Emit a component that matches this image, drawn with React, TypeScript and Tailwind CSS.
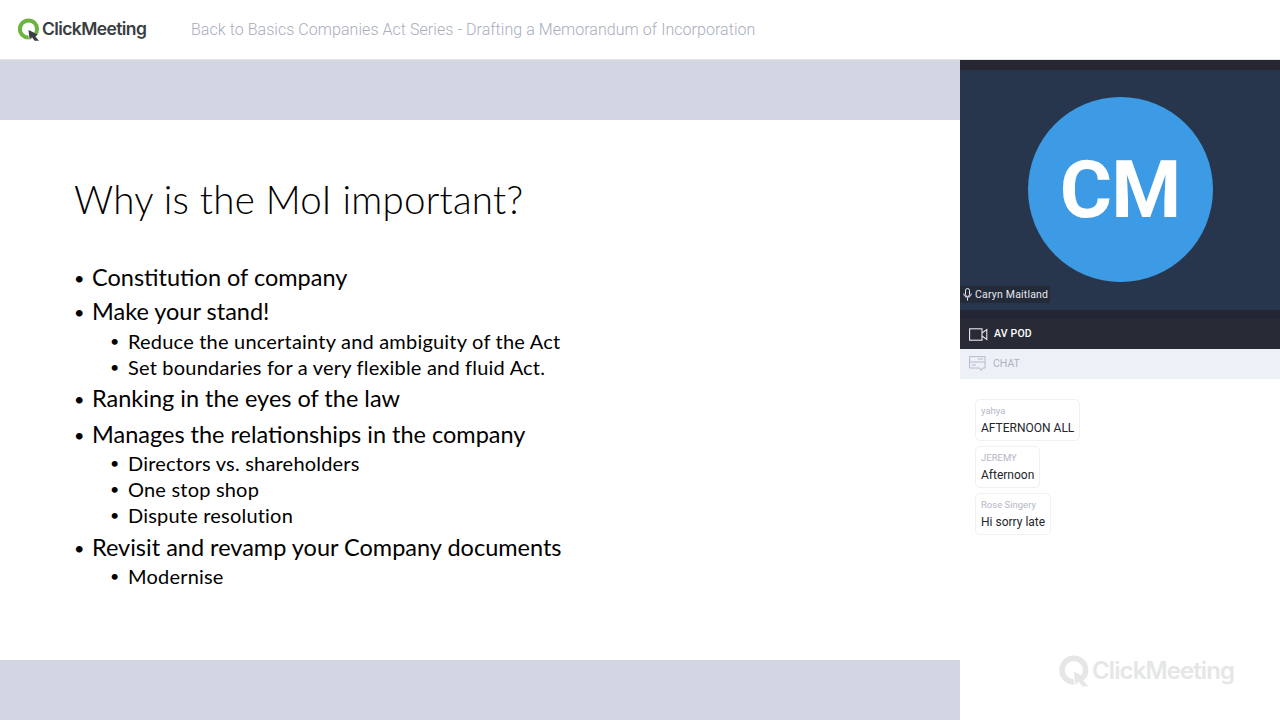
import React from "react";

const slideItems = [
  { text: "Constitution of company", level: 1, mt: "mt-0" },
  { text: "Make your stand!", level: 1, mt: "mt-1" },
  { text: "Reduce the uncertainty and ambiguity of the Act", level: 2, mt: "mt-px" },
  { text: "Set boundaries for a very flexible and fluid Act.", level: 2, mt: "mt-0" },
  { text: "Ranking in the eyes of the law", level: 1, mt: "mt-1" },
  { text: "Manages the relationships in the company", level: 1, mt: "mt-1.5" },
  { text: "Directors vs. shareholders", level: 2, mt: "mt-0" },
  { text: "One stop shop", level: 2, mt: "mt-0" },
  { text: "Dispute resolution", level: 2, mt: "mt-0" },
  { text: "Revisit and revamp your Company documents", level: 1, mt: "mt-[5px]" },
  { text: "Modernise", level: 2, mt: "mt-0" },
];

const messages = [
  { author: "yahya", text: "AFTERNOON ALL" },
  { author: "JEREMY", text: "Afternoon" },
  { author: "Rose Singery", text: "Hi sorry late" },
];

// ring with the cursor arrow, same shape for both logos
function LogoMark({ ring, arrow, size }: { ring: string; arrow: string; size: number }) {
  return (
    <svg width={size} height={size} viewBox="0 0 24 24" fill="none">
      <circle cx="11.5" cy="11" r="8.6" stroke={ring} strokeWidth="4" />
      <path d="M11 11.5 L12 23 L14.6 20.3 L17 23.6 L23 23.6 L19 18.8 L21.6 17 Z" fill="#fff" />
      <path d="M11.5 12 L12.6 21.5 L15 19.2 L17.6 22.8 L22 22.8 L18.4 18.4 L20.8 16.6 Z" fill={arrow} />
    </svg>
  );
}

function Slide() {
  return (
    <div className="bg-white h-[540px] pl-[74px] pt-[55px] text-black font-['Lato','Carlito',sans-serif]">
      <h1 className="text-[38.5px] leading-[48px] font-light tracking-[0.25px]">Why is the MoI important?</h1>
      <ul className="mt-[40px]">
        {slideItems.map((item, i) =>
          item.level === 1 ? (
            <li key={i} className={`flex h-[30px] items-center text-[23.5px] ${item.mt}`}>
              <span className="w-[18px] text-[18px]">•</span>
              <span>{item.text}</span>
            </li>
          ) : (
            <li key={i} className={`flex h-[26px] items-center pl-[36px] text-[20px] tracking-[0.2px] ${item.mt}`}>
              <span className="w-[18px] text-[16px]">•</span>
              <span>{item.text}</span>
            </li>
          )
        )}
      </ul>
    </div>
  );
}

export default function App() {
  return (
    <div className="w-[1280px] h-[720px] overflow-hidden bg-white flex flex-col font-['Roboto',sans-serif]">
      <header className="h-[60px] shrink-0 flex items-center bg-white border-b border-[#e4e5ea]">
        <div className="ml-[17px] flex items-center w-[174px]">
          <LogoMark ring="#6cb33f" arrow="#3a3d42" size={24} />
          <span className="ml-[1px] text-[17.5px] font-semibold tracking-[-0.6px] text-[#3a3d42] font-['Inter',sans-serif]">
            ClickMeeting
          </span>
        </div>
        <div className="text-[16px] font-light text-[#a9adbd] tracking-[0.05px]">
          Back to Basics Companies Act Series - Drafting a Memorandum of Incorporation
        </div>
      </header>

      <div className="flex flex-1 min-h-0">
        <main className="w-[960px] flex flex-col">
          <div className="h-[60px] bg-[#d2d6e2]" />
          <Slide />
          <div className="flex-1 bg-[#d2d6e2]" />
        </main>

        <aside className="w-[320px] flex flex-col">
          <div className="h-[10px] bg-[#272733]" />
          <div className="relative h-[240px] bg-[#27364c] flex justify-center pt-[27px]">
            <div className="w-[185px] h-[185px] rounded-full bg-[#3d9ae4] flex items-center justify-center text-white text-[80px] font-bold tracking-[-1px]">
              CM
            </div>
            <div className="absolute left-0 bottom-[7px] h-[17px] w-[90px] bg-[#232a38] flex items-center pl-[3px] text-[#e6e8ee] text-[10.5px] tracking-[0.2px]">
              <svg width="9" height="13" viewBox="0 0 9 13" fill="none" stroke="#e6e8ee" strokeWidth="1" className="mr-[3px]">
                <rect x="2.5" y="0.5" width="4" height="8" rx="2" />
                <path d="M0.8 5.5c0 5 7.4 5 7.4 0M4.5 10v2.5" />
              </svg>
              Caryn Maitland
            </div>
          </div>
          <div className="h-[9px] bg-[#232733]" />
          <div className="h-[30px] bg-[#282a35] flex items-center pl-[9px] text-white">
            <svg width="19" height="13" viewBox="0 0 19 13" fill="none" stroke="#e8e9ee" strokeWidth="1.1">
              <rect x="0.6" y="0.8" width="12.4" height="11.4" />
              <path d="M13 5l4.8-3.4v9.8L13 8" />
            </svg>
            <span className="ml-[6px] text-[10.5px] font-medium tracking-[0.2px]">AV POD</span>
          </div>
          <div className="h-[30px] bg-[#eef0f8] flex items-center pl-[9px]">
            <svg width="17" height="16" viewBox="0 0 17 16" fill="none" stroke="#b6bac9" strokeWidth="1">
              <rect x="0.6" y="0.6" width="15.4" height="5.4" />
              <path d="M0.6 6v6h10l1.5 2.5 1.5-2.5h2.4V6" />
              <path d="M3 9h4M9 3h5" />
            </svg>
            <span className="ml-[7px] text-[10.5px] text-[#aeb2c2]">CHAT</span>
          </div>

          <div className="relative flex-1 bg-white pl-[15px] pt-[20px] flex flex-col items-start gap-[5px]">
            {messages.map((m) => (
              <div key={m.author} className="h-[42px] border border-[#f0f1f5] rounded-[5px] px-[5px] pt-[5px]">
                <div className="text-[9.5px] leading-[12px] text-[#b4b7c6]">{m.author}</div>
                <div className="mt-[3px] text-[12px] leading-[16px] text-[#23252b]">{m.text}</div>
              </div>
            ))}
            <div className="absolute left-[98px] top-[274px] flex items-center opacity-90">
              <LogoMark ring="#e3e4e4" arrow="#e3e4e4" size={33} />
              <span className="ml-[1px] text-[24px] font-semibold tracking-[-0.9px] text-[#e3e4e4] font-['Inter',sans-serif]">
                ClickMeeting
              </span>
            </div>
          </div>
        </aside>
      </div>
    </div>
  );
}
